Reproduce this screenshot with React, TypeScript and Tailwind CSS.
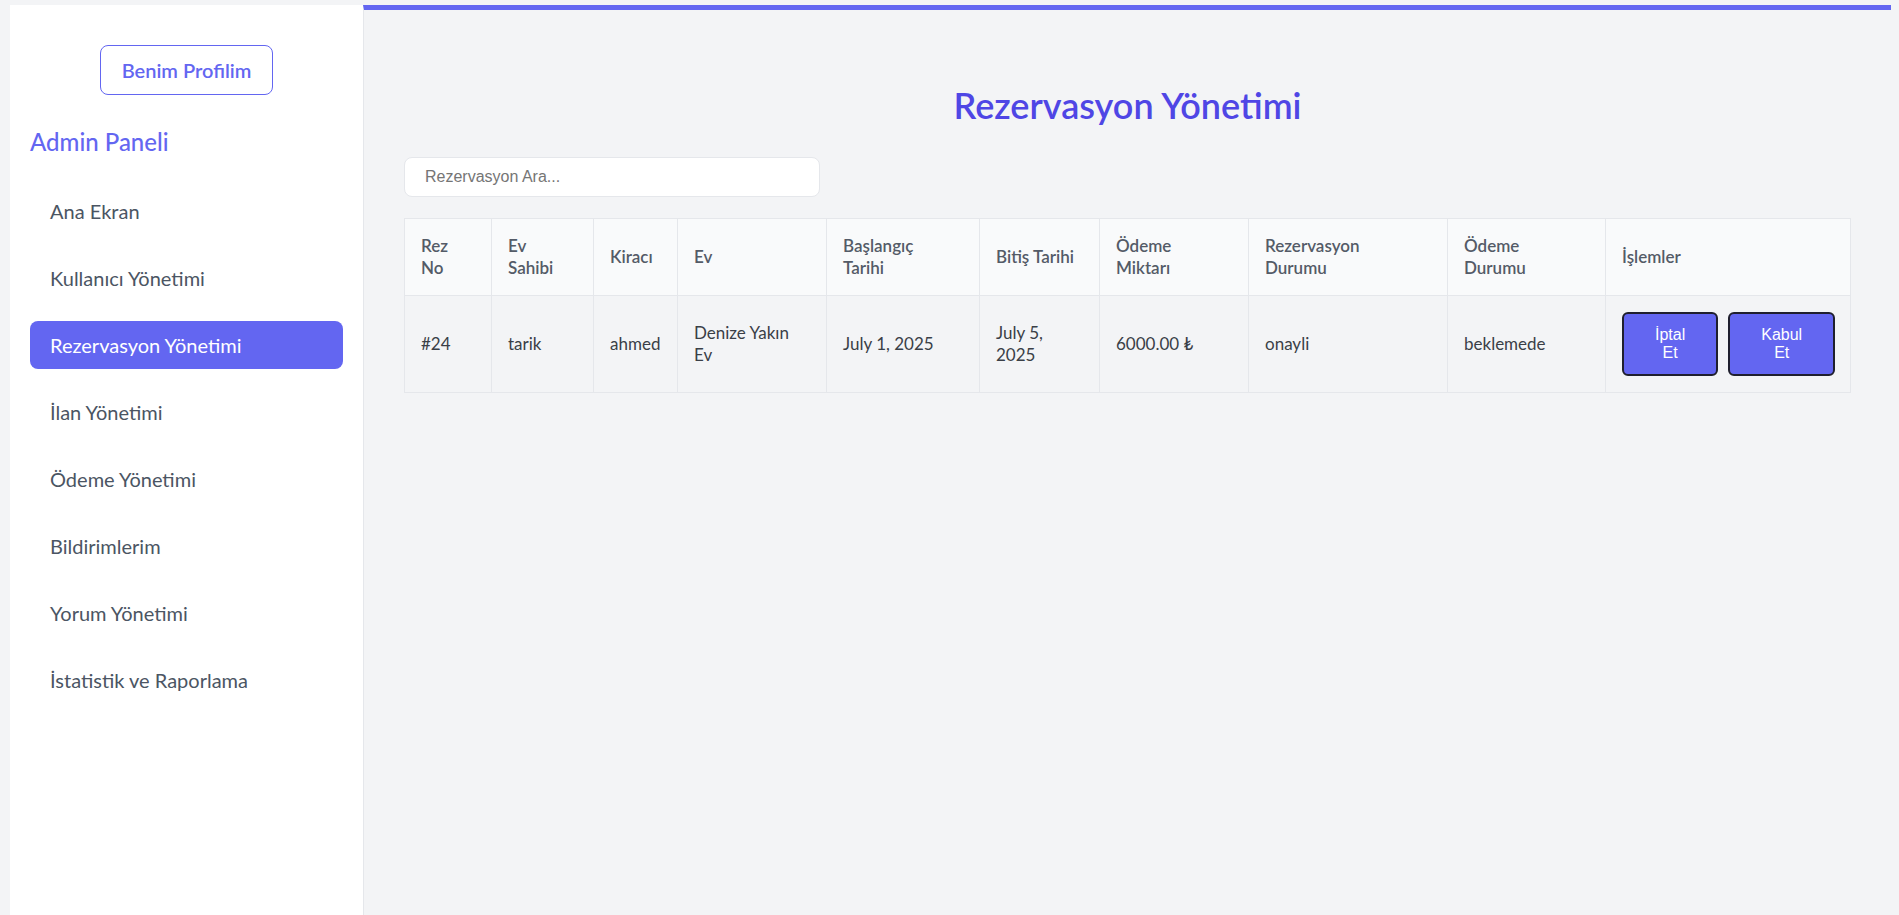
import React from "react";

const navItems = [
  "Ana Ekran",
  "Kullanıcı Yönetimi",
  "Rezervasyon Yönetimi",
  "İlan Yönetimi",
  "Ödeme Yönetimi",
  "Bildirimlerim",
  "Yorum Yönetimi",
  "İstatistik ve Raporlama",
];

// each header / cell is written as its visible lines
const headers: string[][] = [
  ["Rez", "No"],
  ["Ev", "Sahibi"],
  ["Kiracı"],
  ["Ev"],
  ["Başlangıç", "Tarihi"],
  ["Bitiş Tarihi"],
  ["Ödeme", "Miktarı"],
  ["Rezervasyon", "Durumu"],
  ["Ödeme", "Durumu"],
  ["İşlemler"],
];

const row: string[][] = [
  ["#24"],
  ["tarik"],
  ["ahmed"],
  ["Denize Yakın", "Ev"],
  ["July 1, 2025"],
  ["July 5,", "2025"],
  ["6000.00 ₺"],
  ["onayli"],
  ["beklemede"],
];

function Lines({ lines }: { lines: string[] }) {
  return (
    <>
      {lines.map((l, i) => (
        <span key={i} className="block whitespace-nowrap">
          {l}
        </span>
      ))}
    </>
  );
}

function Sidebar() {
  return (
    <aside className="w-[353px] shrink-0 bg-white px-5 pt-10">
      <div className="flex justify-center mb-[31px]">
        <button className="rounded-lg border border-[#6366f1] px-[21px] py-[10px] text-xl leading-7 font-semibold text-[#6366f1]">
          Benim Profilim
        </button>
      </div>
      <h2 className="text-2xl leading-8 font-medium text-[#6366f1] mb-[29px]">
        Admin Paneli
      </h2>
      <nav className="flex flex-col gap-[19px]">
        {navItems.map((item) => (
          <a
            key={item}
            href="#"
            className={
              item === "Rezervasyon Yönetimi"
                ? "block rounded-lg bg-[#6366f1] px-5 py-2.5 text-xl leading-7 text-white"
                : "block rounded-lg px-5 py-2.5 text-xl leading-7 text-[#4b5563]"
            }
          >
            {item}
          </a>
        ))}
      </nav>
    </aside>
  );
}

export default function App() {
  return (
    <div className="flex h-screen bg-[#f3f4f6] pl-[10px] pt-[5px] pr-[8px] font-['Lato',sans-serif]">
      <Sidebar />
      <main className="flex-1 border-l border-gray-200 border-t-[5px] border-t-[#6366f1] px-10 pt-[75px]">
        <h1 className="text-center text-4xl leading-10 font-semibold text-[#4f46e5] mb-8">
          Rezervasyon Yönetimi
        </h1>
        <input
          type="text"
          placeholder="Rezervasyon Ara..."
          className="mb-[21px] block h-10 w-[416px] rounded-lg border border-gray-200 bg-white px-5 font-['Liberation_Sans',Arial,sans-serif] text-base placeholder:text-[#757575] outline-none"
        />
        <table className="w-full table-fixed border-collapse text-[17px] leading-[22px]">
          <colgroup>
            <col className="w-[87px]" />
            <col className="w-[102px]" />
            <col className="w-[84px]" />
            <col className="w-[149px]" />
            <col className="w-[153px]" />
            <col className="w-[120px]" />
            <col className="w-[149px]" />
            <col className="w-[199px]" />
            <col className="w-[158px]" />
            <col />
          </colgroup>
          <thead>
            <tr className="bg-[#f9fafb]">
              {headers.map((h, i) => (
                <th
                  key={i}
                  className="border border-gray-200 px-4 py-4 text-left align-middle font-semibold text-[#545b67]"
                >
                  <Lines lines={h} />
                </th>
              ))}
            </tr>
          </thead>
          <tbody>
            <tr className="bg-[#f3f4f6]">
              {row.map((c, i) => (
                <td
                  key={i}
                  className="border border-gray-200 px-4 py-4 align-middle text-[#3a3f47]"
                >
                  <Lines lines={c} />
                </td>
              ))}
              <td className="border border-gray-200 px-4 py-4 align-middle">
                <div className="flex gap-[10px]">
                  <button className="rounded-md border-2 border-[#1f1f2e] bg-[#6366f1] px-[31px] py-3 font-['Liberation_Sans',Arial,sans-serif] text-base leading-[18px] text-white">
                    İptal
                    <br />
                    Et
                  </button>
                  <button className="rounded-md border-2 border-[#1f1f2e] bg-[#6366f1] px-[31px] py-3 font-['Liberation_Sans',Arial,sans-serif] text-base leading-[18px] text-white">
                    Kabul
                    <br />
                    Et
                  </button>
                </div>
              </td>
            </tr>
          </tbody>
        </table>
      </main>
    </div>
  );
}
